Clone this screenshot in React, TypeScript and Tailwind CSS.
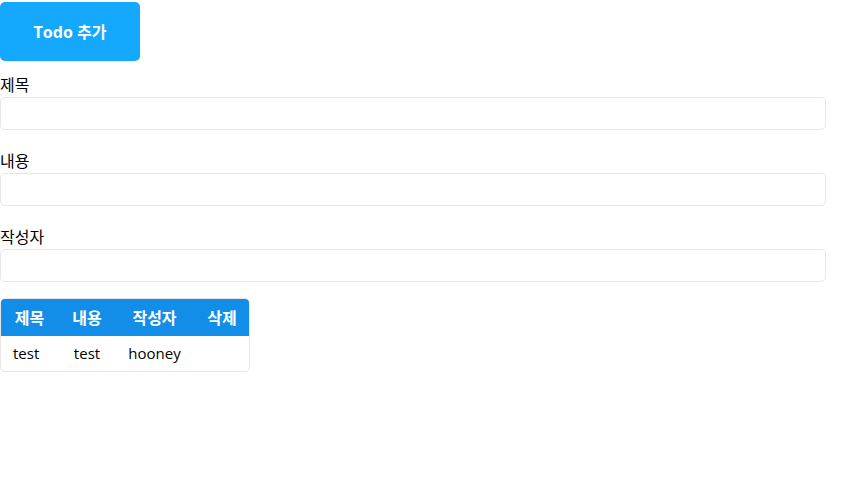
export default function App() {
  const fields = ["제목", "내용", "작성자"];
  const todos = [{ title: "test", content: "test", writer: "hooney" }];

  return (
    <div
      className="min-h-screen bg-white text-black"
      style={{ fontFamily: '"Open Sans", "Noto Sans CJK KR", sans-serif' }}
    >
      <button className="mt-[2px] flex h-[59px] w-[140px] items-center justify-center rounded-[5px] bg-[#15a8ff] text-[16px] font-bold text-white">
        Todo 추가
      </button>

      <div className="mt-[12px] flex flex-col gap-[19px]">
        {fields.map((label) => (
          <div key={label} className="flex flex-col">
            <label className="h-[24px] text-[16px] leading-[24px]">{label}</label>
            <input
              type="text"
              className="h-[33px] w-[826px] rounded-[5px] border border-[#e6e6e6] px-2 outline-none"
            />
          </div>
        ))}
      </div>

      <div className="mt-[16px] w-[250px] overflow-hidden rounded-[5px] border border-[#e6e6e6]">
        <table className="w-full table-fixed border-collapse">
          <thead>
            <tr className="h-[37px] bg-[#128ee9] text-[16px] font-bold text-white">
              <th className="w-[57px] text-center font-bold">제목</th>
              <th className="w-[58px] text-center font-bold">내용</th>
              <th className="w-[77px] text-center font-bold">작성자</th>
              <th className="w-[58px] text-center font-bold">삭제</th>
            </tr>
          </thead>
          <tbody>
            {todos.map((t, i) => (
              <tr key={i} className="h-[35px] text-[15px]">
                <td className="pl-[12px] text-left">{t.title}</td>
                <td className="text-center">{t.content}</td>
                <td className="text-center">{t.writer}</td>
                <td></td>
              </tr>
            ))}
          </tbody>
        </table>
      </div>
    </div>
  );
}
